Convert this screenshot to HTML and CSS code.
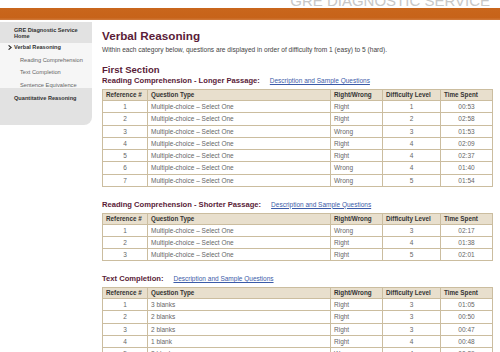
FILE: index.html
```html
<!DOCTYPE html>
<html lang="en">
<head>
<meta charset="utf-8">
<title>GRE Diagnostic Service - Verbal Reasoning</title>
<link rel="stylesheet" href="styles.css">
</head>
<body>
<header class="top">
  <div class="brand"><span class="brand-text">GRE DIAGNOSTIC SERVICE</span></div>
  <div class="bar"></div>
</header>
<div class="layout">
  <nav class="side">
    <div class="side-home">GRE Diagnostic Service Home</div>
    <div class="side-current">
      <div class="side-active"><svg class="chev" width="4" height="5" viewBox="0 0 4 5"><path d="M0.6 0.4 L3.2 2.5 L0.6 4.6" fill="none" stroke="#222" stroke-width="1.1"/></svg>Verbal Reasoning</div>
      <div class="side-sub">Reading Comprehension</div>
      <div class="side-sub">Text Completion</div>
      <div class="side-sub">Sentence Equivalence</div>
    </div>
    <div class="side-quant">Quantitative Reasoning</div>
  </nav>
  <main class="main">
    <h1 class="title">Verbal Reasoning</h1>
    <p class="intro">Within each category below, questions are displayed in order of difficulty from 1 (easy) to 5 (hard).</p>
    <h2 class="section">First Section</h2>

    <div class="cat"><h3 class="cat-title">Reading Comprehension - Longer Passage:</h3><a class="cat-link" href="#">Description and Sample Questions</a></div>
    <table class="grid">
      <colgroup><col class="c-ref"><col class="c-type"><col class="c-rw"><col class="c-diff"><col class="c-time"></colgroup>
      <thead><tr><th>Reference #</th><th>Question Type</th><th>Right/Wrong</th><th>Difficulty Level</th><th>Time Spent</th></tr></thead>
      <tbody>
        <tr><td class="ctr">1</td><td>Multiple-choice – Select One</td><td>Right</td><td class="ctr">1</td><td class="ctr">00:53</td></tr>
        <tr><td class="ctr">2</td><td>Multiple-choice – Select One</td><td>Right</td><td class="ctr">2</td><td class="ctr">02:58</td></tr>
        <tr><td class="ctr">3</td><td>Multiple-choice – Select One</td><td>Wrong</td><td class="ctr">3</td><td class="ctr">01:53</td></tr>
        <tr><td class="ctr">4</td><td>Multiple-choice – Select One</td><td>Right</td><td class="ctr">4</td><td class="ctr">02:09</td></tr>
        <tr><td class="ctr">5</td><td>Multiple-choice – Select One</td><td>Right</td><td class="ctr">4</td><td class="ctr">02:37</td></tr>
        <tr><td class="ctr">6</td><td>Multiple-choice – Select One</td><td>Wrong</td><td class="ctr">4</td><td class="ctr">01:40</td></tr>
        <tr><td class="ctr">7</td><td>Multiple-choice – Select One</td><td>Wrong</td><td class="ctr">5</td><td class="ctr">01:54</td></tr>
      </tbody>
    </table>

    <div class="cat"><h3 class="cat-title">Reading Comprehension - Shorter Passage:</h3><a class="cat-link" href="#">Description and Sample Questions</a></div>
    <table class="grid">
      <colgroup><col class="c-ref"><col class="c-type"><col class="c-rw"><col class="c-diff"><col class="c-time"></colgroup>
      <thead><tr><th>Reference #</th><th>Question Type</th><th>Right/Wrong</th><th>Difficulty Level</th><th>Time Spent</th></tr></thead>
      <tbody>
        <tr><td class="ctr">1</td><td>Multiple-choice – Select One</td><td>Wrong</td><td class="ctr">3</td><td class="ctr">02:17</td></tr>
        <tr><td class="ctr">2</td><td>Multiple-choice – Select One</td><td>Right</td><td class="ctr">4</td><td class="ctr">01:38</td></tr>
        <tr><td class="ctr">3</td><td>Multiple-choice – Select One</td><td>Right</td><td class="ctr">5</td><td class="ctr">02:01</td></tr>
      </tbody>
    </table>

    <div class="cat"><h3 class="cat-title">Text Completion:</h3><a class="cat-link" href="#">Description and Sample Questions</a></div>
    <table class="grid">
      <colgroup><col class="c-ref"><col class="c-type"><col class="c-rw"><col class="c-diff"><col class="c-time"></colgroup>
      <thead><tr><th>Reference #</th><th>Question Type</th><th>Right/Wrong</th><th>Difficulty Level</th><th>Time Spent</th></tr></thead>
      <tbody>
        <tr><td class="ctr">1</td><td>3 blanks</td><td>Right</td><td class="ctr">3</td><td class="ctr">01:05</td></tr>
        <tr><td class="ctr">2</td><td>2 blanks</td><td>Right</td><td class="ctr">3</td><td class="ctr">00:50</td></tr>
        <tr><td class="ctr">3</td><td>2 blanks</td><td>Right</td><td class="ctr">3</td><td class="ctr">00:47</td></tr>
        <tr><td class="ctr">4</td><td>1 blank</td><td>Right</td><td class="ctr">4</td><td class="ctr">00:48</td></tr>
        <tr><td class="ctr">5</td><td>2 blanks</td><td>Wrong</td><td class="ctr">4</td><td class="ctr">00:29</td></tr>
      </tbody>
    </table>
  </main>
</div>
</body>
</html>
```
FILE: styles.css
```css
* { box-sizing: border-box; }
html, body { margin: 0; padding: 0; background: #fff; }
body {
  font-family: "Liberation Sans", Arial, sans-serif;
  color: #444;
  width: 500px;
  height: 352px;
  overflow: hidden;
}

/* header */
.brand {
  height: 8px;
  overflow: hidden;
  display: flex;
  justify-content: flex-end;
  align-items: flex-end;
  padding-right: 10px;
}
.brand-text {
  font-size: 15px;
  line-height: 14px;
  color: #c8c8c8;
  white-space: nowrap;
}
.bar {
  height: 12px;
  background: linear-gradient(#c9661c, #c76319 80%, #d17b3c);
}

/* layout */
.layout {
  display: flex;
  gap: 10px;
  padding-top: 2px;
}

/* sidebar */
.side {
  width: 92px;
  flex: none;
  font-size: 5.6px;
}
.side-home {
  background: #e2e2e2;
  color: #333;
  font-weight: bold;
  line-height: 6px;
  padding: 5px 10px 4px 14px;
  height: 21px;
}
.side-current {
  background: #f6f6f6;
  padding-top: 1px;
  height: 45px;
}
.side-active {
  display: flex;
  align-items: center;
  font-weight: bold;
  color: #333;
  line-height: 7px;
  padding-left: 8px;
}
.chev { margin-right: 2px; }
.side-sub {
  color: #666;
  line-height: 7px;
  margin-top: 5.5px;
  padding-left: 20px;
  font-size: 5.7px;
}
.side-quant {
  background: #e2e2e2;
  color: #333;
  font-weight: bold;
  line-height: 7px;
  padding: 7px 8px 0 14px;
  height: 37px;
  border-bottom-right-radius: 8px;
}

/* main */
.main {
  flex: 1;
  padding-right: 8px;
  min-width: 0;
}
.title {
  margin: 6.5px 0 0;
  font-size: 11.7px;
  line-height: 14.5px;
  font-weight: bold;
  color: #5a1c38;
}
.intro {
  margin: 2.5px 0 0;
  font-size: 6.6px;
  line-height: 8px;
  color: #444;
}
.section {
  margin: 10px 0 0;
  font-size: 9.5px;
  line-height: 11px;
  font-weight: bold;
  color: #5a1c38;
}
.cat {
  display: flex;
  align-items: baseline;
  gap: 10px;
  margin-top: 2.5px;
}
.grid + .cat { margin-top: 13.5px; }
.cat-title {
  margin: 0;
  font-size: 7.6px;
  line-height: 8px;
  font-weight: bold;
  color: #5a1c38;
}
.cat-link {
  font-size: 6.5px;
  line-height: 8px;
  color: #3b5ba8;
  text-decoration: underline;
}

/* tables */
.grid {
  width: 100%;
  margin-top: 4px;
  border-collapse: collapse;
  table-layout: fixed;
  font-size: 6.5px;
  color: #666;
}
.c-ref { width: 45px; }
.c-type { width: 183px; }
.c-rw { width: 52px; }
.c-diff { width: 58px; }
.c-time { width: 52px; }
.grid th, .grid td {
  border: 1px solid #cbbd9f;
  padding: 0 3px;
  white-space: nowrap;
  overflow: hidden;
}
.grid th {
  background: #e8dfcd;
  color: #333;
  font-weight: bold;
  text-align: left;
  line-height: 10px;
  font-size: 6.3px;
}
.grid td {
  line-height: 11.3px;
  background: #fff;
}
.grid td.ctr { text-align: center; }
```
